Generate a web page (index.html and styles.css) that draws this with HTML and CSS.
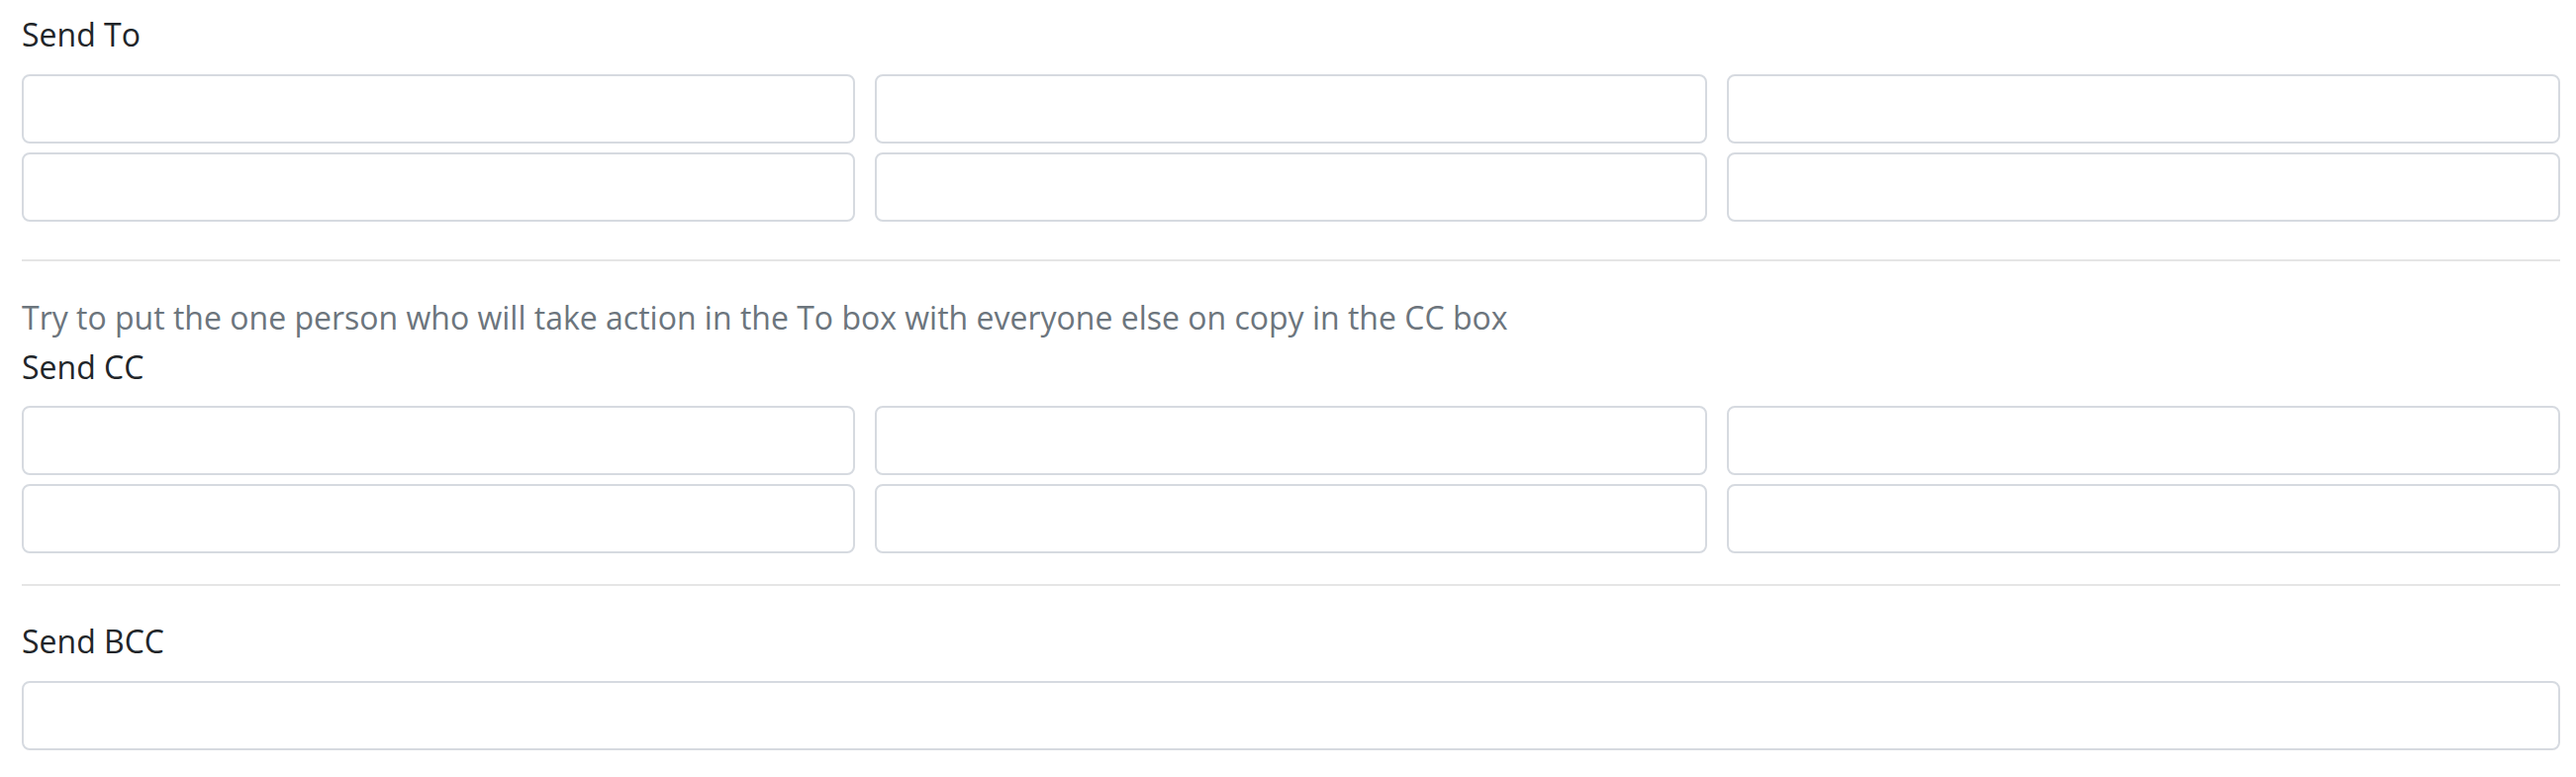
FILE: index.html
```html
<!DOCTYPE html>
<html lang="en">

<head>
    <meta charset="UTF-8">
    <meta name="viewport" content="width=device-width, initial-scale=1.0">
    <title>Send Options</title>
    <link rel="stylesheet" href="styles.css">
</head>

<body>
    <div class="container">
        <div class="form-group form-group-to">
            <label class="field-label">Send To</label>
            <div class="input-grid">
                <input type="text" class="form-control" name="to1">
                <input type="text" class="form-control" name="to2">
                <input type="text" class="form-control" name="to3">
                <input type="text" class="form-control" name="to4">
                <input type="text" class="form-control" name="to5">
                <input type="text" class="form-control" name="to6">
            </div>
        </div>

        <hr class="divider divider-first">

        <div class="form-group form-group-cc">
            <p class="help-text">Try to put the one person who will take action in the To box with everyone else on copy in the CC box</p>
            <label class="field-label">Send CC</label>
            <div class="input-grid">
                <input type="text" class="form-control" name="cc1">
                <input type="text" class="form-control" name="cc2">
                <input type="text" class="form-control" name="cc3">
                <input type="text" class="form-control" name="cc4">
                <input type="text" class="form-control" name="cc5">
                <input type="text" class="form-control" name="cc6">
            </div>
        </div>

        <hr class="divider divider-second">

        <div class="form-group form-group-bcc">
            <label class="field-label">Send BCC</label>
            <input type="text" class="form-control" name="bcc">
        </div>
    </div>
</body>

</html>
```

FILE: styles.css
```css
body {
    margin: 0;
    font-family: "Open Sans", "Noto Sans", sans-serif;
    font-size: 32px;
    line-height: 48px;
    color: #212529;
    background-color: #fff;
}

.container {
    padding: 11px 16px 0 22px;
}

.form-group {
    margin: 0;
}

.field-label {
    display: block;
    margin-bottom: 16px;
}

.form-group-cc .field-label {
    margin-bottom: 15px;
}

.help-text {
    margin: 0 0 2px;
    color: #6c757d;
}

.input-grid {
    display: grid;
    grid-template-columns: repeat(3, 1fr);
    gap: 9px 20px;
}

.form-control {
    display: block;
    width: 100%;
    height: 70px;
    margin: 0;
    padding: 0 22px;
    font: inherit;
    color: #495057;
    background-color: #fff;
    border: 2px solid #d6dae0;
    border-radius: 8px;
    box-sizing: border-box;
}

.divider {
    height: 0;
    margin: 0;
    border: 0;
    border-top: 2px solid rgba(0, 0, 0, 0.1);
}

.divider-first {
    margin: 38px 0 33px;
}

.divider-second {
    margin: 31px 0 32px;
}
```
